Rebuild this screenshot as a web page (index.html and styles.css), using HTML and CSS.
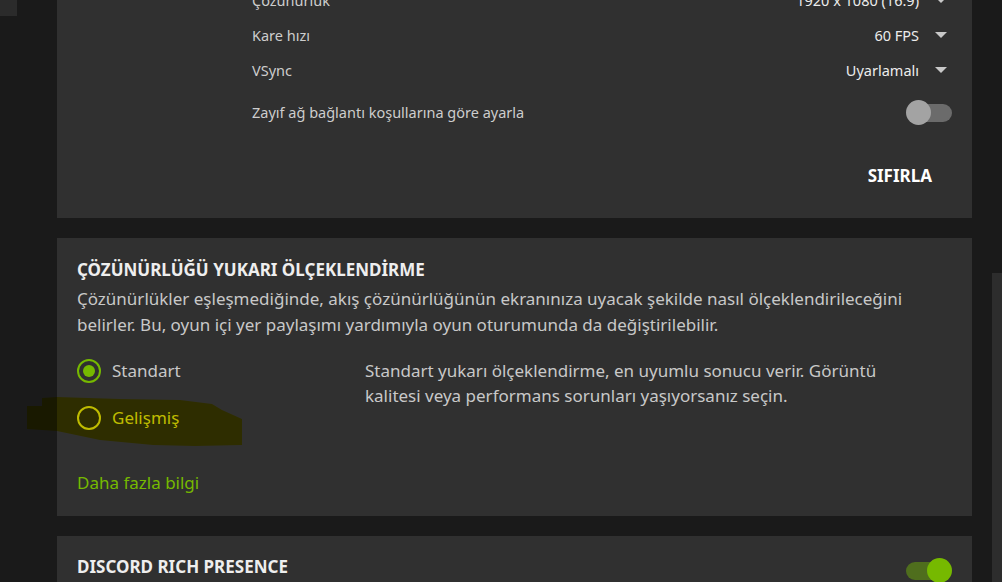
FILE: index.html
```html
<!DOCTYPE html>
<html lang="tr">
<head>
    <meta charset="UTF-8">
    <title>Ayarlar</title>
    <link rel="stylesheet" href="styles.css">
</head>
<body>
<div class="corner"></div>
<div class="scrollbar"></div>

<div class="sayfa">
    <div class="panel yayin">
        <div class="satir">
            <span class="etiket">Çözünürlük</span>
            <span class="deger">1920 x 1080 (16:9)<i class="ok"></i></span>
        </div>
        <div class="satir">
            <span class="etiket">Kare hızı</span>
            <span class="deger">60 FPS<i class="ok"></i></span>
        </div>
        <div class="satir">
            <span class="etiket">VSync</span>
            <span class="deger">Uyarlamalı<i class="ok"></i></span>
        </div>
        <div class="satir uzun">
            <span class="etiket">Zayıf ağ bağlantı koşullarına göre ayarla</span>
            <span class="anahtar"><b></b></span>
        </div>
        <div class="alt">
            <div class="sifirla">SIFIRLA</div>
        </div>
    </div>

    <div class="panel">
        <div class="baslik">ÇÖZÜNÜRLÜĞÜ YUKARI ÖLÇEKLENDİRME</div>
        <p class="aciklama">Çözünürlükler eşleşmediğinde, akış çözünürlüğünün ekranınıza uyacak şekilde nasıl ölçeklendirileceğini belirler. Bu, oyun içi yer paylaşımı yardımıyla oyun oturumunda da değiştirilebilir.</p>
        <div class="secimler">
            <div class="radyolar">
                <div class="radyo secili"><i></i>Standart</div>
                <div class="radyo"><i></i>Gelişmiş</div>
            </div>
            <p class="not">Standart yukarı ölçeklendirme, en uyumlu sonucu verir. Görüntü kalitesi veya performans sorunları yaşıyorsanız seçin.</p>
        </div>
        <div class="bilgi">Daha fazla bilgi</div>
    </div>

    <div class="panel discord">
        <div class="baslik">DISCORD RICH PRESENCE</div>
        <span class="anahtar acik"><b></b></span>
    </div>
</div>

<svg class="isaret" width="260" height="60" viewBox="0 0 260 60">
    <polygon points="27,16 42,16 42,8 57,7 120,9 180,10 212,14 222,20 242,29 242,55 195,56 153,55 100,50 57,41 27,39" fill="#f4ef00"/>
</svg>
</body>
</html>
```

FILE: styles.css
```css
*{
    padding: 0;
    margin: 0;
    box-sizing: border-box;
}
body{
    background: #1a1a1a;
    font-family: "Noto Sans", "Open Sans", sans-serif;
    color: #c8c8c8;
    overflow: hidden;
}
.corner{
    position: fixed;
    left: 0;
    top: 0;
    width: 17px;
    height: 16px;
    background: #2b2b2b;
}
.scrollbar{
    position: fixed;
    left: 992px;
    top: 273px;
    width: 10px;
    height: 400px;
    background: #2d2d2d;
}
.sayfa{
    width: 915px;
    margin-left: 57px;
    margin-top: -18px;
    display: flex;
    flex-direction: column;
    gap: 20px;
}
.panel{
    background: #303030;
    padding: 22px 20px 0 20px;
}
.yayin{
    padding: 0 20px 0 195px;
}
.satir{
    height: 35px;
    display: flex;
    align-items: center;
    justify-content: space-between;
    font-size: 14.5px;
}
.satir.uzun{
    height: 36px;
    margin-top: 7px;
}
.etiket{
    color: #cdcdcd;
}
.deger{
    color: #ececec;
    display: flex;
    align-items: center;
    padding-right: 5px;
}
.ok{
    width: 0;
    height: 0;
    margin-left: 16px;
    border-left: 6px solid transparent;
    border-right: 6px solid transparent;
    border-top: 6px solid #c8c8c8;
}
.anahtar{
    width: 46px;
    height: 25px;
    position: relative;
    display: block;
}
.anahtar::before{
    content: "";
    position: absolute;
    left: 4px;
    right: 0;
    top: 4px;
    height: 18px;
    border-radius: 9px;
    background: #6b6b6b;
}
.anahtar b{
    position: absolute;
    left: 0;
    top: 0;
    width: 25px;
    height: 25px;
    border-radius: 50%;
    background: #a3a3a3;
}
.anahtar.acik::before{
    background: #4f6e1d;
    right: 4px;
    left: 0;
}
.anahtar.acik b{
    left: auto;
    right: 0;
    background: #76b900;
}
.alt{
    height: 88px;
    display: flex;
    justify-content: flex-end;
    align-items: center;
    padding-right: 20px;
    padding-top: 2px;
}
.sifirla{
    color: #fff;
    font-weight: bold;
    font-size: 17px;
}
.baslik{
    color: #eeeeee;
    font-weight: bold;
    font-size: 17px;
    line-height: 20px;
}
.aciklama{
    font-size: 17px;
    line-height: 26px;
    margin-top: 6px;
    padding-right: 40px;
}
.secimler{
    display: flex;
    margin-top: 20px;
}
.radyolar{
    width: 288px;
    flex-shrink: 0;
    display: flex;
    flex-direction: column;
    gap: 22px;
}
.radyo{
    display: flex;
    align-items: center;
    font-size: 17px;
    height: 25px;
}
.radyo i{
    width: 24px;
    height: 24px;
    border-radius: 50%;
    border: 2px solid #c8c8c8;
    margin-right: 11px;
    display: flex;
    align-items: center;
    justify-content: center;
}
.radyo.secili i{
    border-color: #76b900;
}
.radyo.secili i::after{
    content: "";
    width: 12px;
    height: 12px;
    border-radius: 50%;
    background: #76b900;
}
.not{
    font-size: 17px;
    line-height: 25px;
    width: 545px;
}
.bilgi{
    color: #76b900;
    font-size: 17px;
    line-height: 24px;
    margin-top: 41px;
    height: 45px;
}
.discord{
    display: flex;
    justify-content: space-between;
    align-items: flex-start;
    padding-top: 21px;
    height: 70px;
}
.discord .anahtar{
    margin-top: 1px;
}
.isaret{
    position: absolute;
    left: 0;
    top: 390px;
    mix-blend-mode: multiply;
}
```
